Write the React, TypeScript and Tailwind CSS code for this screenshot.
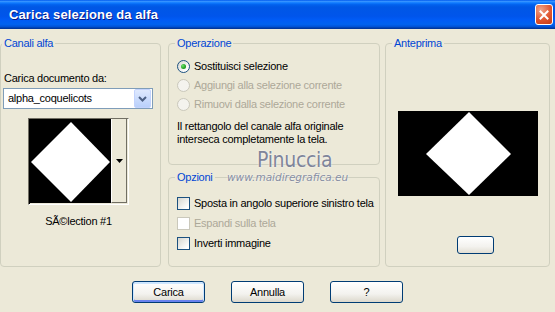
import type { ReactNode } from "react";

type GroupProps = {
  title: string;
  className?: string;
  legendClass?: string;
  children?: ReactNode;
};

function Group({ title, className = "", legendClass = "", children }: GroupProps) {
  return (
    <fieldset className={`m-0 min-w-0 border border-[#d0d0bf] rounded-[4px] p-0 ${className}`}>
      <legend className={`px-[2px] leading-[13px] text-[#0046d5] ${legendClass}`}>{title}</legend>
      {children}
    </fieldset>
  );
}

function Radio({ label, checked, disabled }: { label: string; checked?: boolean; disabled?: boolean }) {
  return (
    <div className="flex h-[19px] items-center">
      <span
        className={`flex h-[13px] w-[13px] items-center justify-center rounded-full border ${
          disabled
            ? "border-[#cac8bb] bg-[#f4f3ee]"
            : "border-[#1c5180] bg-[linear-gradient(135deg,#d6d6cf,#ffffff_80%)]"
        }`}
      >
        {checked && (
          <span className="h-[5px] w-[5px] rounded-full bg-[radial-gradient(circle_at_35%_35%,#6fe06f,#21a121_60%,#167a16)]" />
        )}
      </span>
      <span className={`ml-[4px] whitespace-nowrap ${disabled ? "text-[#aca899]" : ""}`}>{label}</span>
    </div>
  );
}

function Check({ label, disabled }: { label: string; disabled?: boolean }) {
  return (
    <div className="flex h-[20px] items-center">
      <span
        className={`h-[13px] w-[13px] border ${
          disabled
            ? "border-[#cac8bb] bg-white"
            : "border-[#1c5180] bg-[linear-gradient(135deg,#d6d6cf,#ffffff_85%)]"
        }`}
      />
      <span className={`ml-[4px] whitespace-nowrap ${disabled ? "text-[#aca899]" : ""}`}>{label}</span>
    </div>
  );
}

function XpButton({ children, primary }: { children: ReactNode; primary?: boolean }) {
  return (
    <button
      type="button"
      className={`flex h-[22px] w-[73px] items-center justify-center rounded-[3px] border border-[#003c74] bg-[linear-gradient(to_bottom,#ffffff,#f3f2ee_60%,#dcd8cc)] text-black ${
        primary ? "shadow-[inset_0_1px_0_1px_#cee7ff,inset_0_-1px_0_1px_#6982ee]" : ""
      }`}
    >
      {children}
    </button>
  );
}

function Diamond() {
  return (
    <svg width="81" height="83" viewBox="0 0 81 83">
      <rect width="81" height="83" fill="#000" />
      <polygon points="41,2 80,42 41,82 1,42" fill="#fff" />
    </svg>
  );
}

export default function App() {
  return (
    <div className="relative h-[312px] w-[555px] overflow-hidden bg-[#ece9d8] font-['Liberation_Sans',Arial,sans-serif] text-[11px] leading-[13px] tracking-[-0.25px] text-black">
      {/* title bar */}
      <div className="flex h-[29px] items-center bg-[linear-gradient(to_bottom,#0058ee_0%,#3593ff_5%,#0f7bff_10%,#0262ee_16%,#0057e5_24%,#0055eb_56%,#005bf5_68%,#0062ef_84%,#0052d6_92%,#0040ab_96%,#003092_100%)] pl-[9px] pr-[2px]">
        <span className="text-[13px] font-bold tracking-[0.1px] text-white [text-shadow:1px_1px_0_#0a1883]">
          Carica selezione da alfa
        </span>
        <button
          type="button"
          className="ml-auto flex h-[21px] w-[18px] items-center justify-center rounded-[3px] border border-white bg-[radial-gradient(circle_at_30%_25%,#f0a48a,#e0552f_55%,#c23a15)]"
        >
          <svg width="10" height="10" viewBox="0 0 10 10">
            <path d="M1.5 1.5 L8.5 8.5 M8.5 1.5 L1.5 8.5" stroke="#fff" strokeWidth="2" strokeLinecap="square" />
          </svg>
        </button>
      </div>

      {/* group boxes */}
      <div className="flex pt-[8px]">
        <Group title="Canali alfa" className="h-[230px] w-[161px]" legendClass="ml-[1px]">
          <div className="pl-[3px] pt-[22px]">Carica documento da:</div>
          <div className="ml-[2px] mt-[3px] flex h-[21px] w-[150px] items-center border border-[#7f9db9] bg-white pl-[4px] pr-[1px]">
            <span>alpha_coquelicots</span>
            <span className="ml-auto flex h-[19px] w-[17px] items-center justify-center rounded-[2px] border border-[#c3d3fd] bg-[linear-gradient(to_bottom,#dfe9fe,#b9d0fb)]">
              <svg width="9" height="6" viewBox="0 0 9 6">
                <path d="M1 1 L4.5 4.5 L8 1" stroke="#4d6185" strokeWidth="2" fill="none" />
              </svg>
            </span>
          </div>
          <div className="ml-[27px] mt-[9px] w-[101px]">
            <div className="flex h-[87px] w-[101px] border border-b-white border-l-[#716f64] border-r-white border-t-[#716f64] bg-[#ece9d8]">
              <div className="border-l border-t border-black">
                <Diamond />
              </div>
              <div className="flex h-[84px] w-[16px] items-center justify-center border-b border-l border-r border-b-[#716f64] border-l-white border-r-[#716f64]">
                <svg width="7" height="4" viewBox="0 0 7 4">
                  <polygon points="0,0 7,0 3.5,4" fill="#000" />
                </svg>
              </div>
            </div>
            <div className="mt-[10px] text-center">SÃ©lection #1</div>
          </div>
        </Group>

        <div className="ml-[7px] flex w-[212px] flex-col gap-[6px]">
          <Group title="Operazione" className="h-[128px]" legendClass="ml-[6px]">
            <div className="pl-[8px] pt-[7px]">
              <Radio label="Sostituisci selezione" checked />
              <Radio label="Aggiungi alla selezione corrente" disabled />
              <Radio label="Rimuovi dalla selezione corrente" disabled />
              <p className="mt-[6px]">
                Il rettangolo del canale alfa originale
                <br />
                interseca completamente la tela.
              </p>
            </div>
          </Group>
          <Group title="Opzioni" className="h-[96px]" legendClass="ml-[6px]">
            <div className="pl-[8px] pt-[9px]">
              <Check label="Sposta in angolo superiore sinistro tela" />
              <Check label="Espandi sulla tela" disabled />
              <Check label="Inverti immagine" />
            </div>
          </Group>
        </div>

        <Group title="Anteprima" className="ml-[5px] h-[230px] w-[165px]" legendClass="ml-[6px]">
          <div className="ml-[12px] mt-[61px] h-[85px] w-[140px] bg-black">
            <svg width="140" height="85" viewBox="0 0 140 85">
              <polygon points="71,1 113,43 71,84 28,43" fill="#fff" />
            </svg>
          </div>
          <div className="ml-[71px] mt-[40px] h-[18px] w-[37px] rounded-[3px] border border-[#003c74] bg-[linear-gradient(to_bottom,#ffffff,#f3f2ee_60%,#e2ded3)]" />
        </Group>
      </div>

      {/* dialog buttons */}
      <div className="mt-[14px] flex gap-[26px] pl-[132px]">
        <XpButton primary>Carica</XpButton>
        <XpButton>Annulla</XpButton>
        <XpButton>?</XpButton>
      </div>

      {/* watermark */}
      <div className="pointer-events-none absolute left-[257px] top-[150px] font-['DejaVu_Sans_Condensed','DejaVu_Sans',sans-serif] text-[21px] leading-none tracking-[-0.3px] text-[#7f859a] [text-shadow:0_0_2px_#ffffff]">
        Pinuccia
      </div>
      <div className="pointer-events-none absolute left-[227px] top-[171px] font-['DejaVu_Sans',sans-serif] text-[10.5px] italic leading-[12px] tracking-normal text-[#878ea2] [text-shadow:0_0_2px_#ffffff]">
        www.maidiregrafica.eu
      </div>
    </div>
  );
}
